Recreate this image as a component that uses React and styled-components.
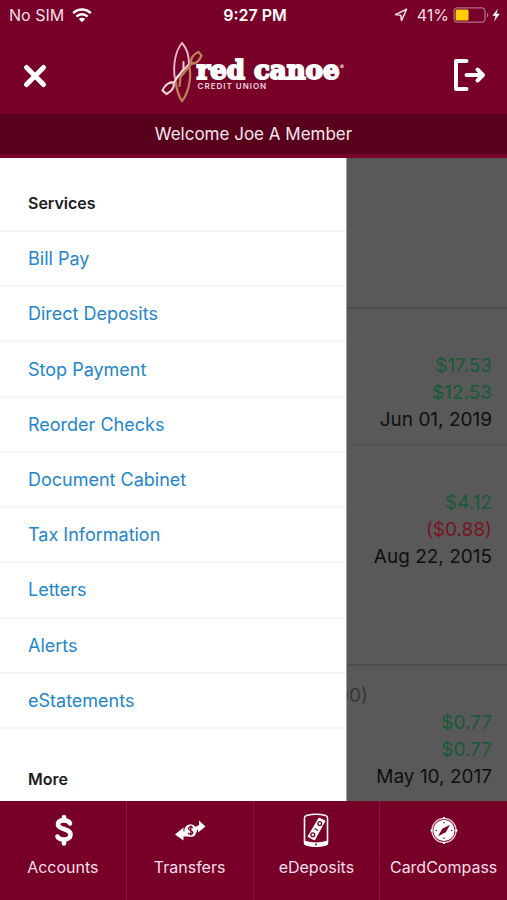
import React from "react";
import styled, { createGlobalStyle } from "styled-components";

const GlobalStyle = createGlobalStyle`
  * {
    box-sizing: border-box;
  }

  body {
    margin: 0;
    font-family: Inter, "Liberation Sans", sans-serif;
    font-size: 18px;
    color: #1c1c1c;
  }
`;

const Screen = styled.div`
  height: 100vh;
  display: flex;
  flex-direction: column;
  overflow: hidden;
`;

const Top = styled.header`
  background: #780028;
  color: white;
  padding-bottom: 4px;
`;

const StatusBar = styled.div`
  display: grid;
  grid-template-columns: 1fr auto 1fr;
  align-items: center;
  height: 30px;
  padding: 0 6px 0 9px;
  font-size: 16px;
`;

const StatusGroup = styled.div`
  display: flex;
  align-items: center;
  justify-content: ${(props) => (props.$end ? "flex-end" : "flex-start")};
  gap: ${(props) => (props.$end ? "4px" : "8px")};
  color: #f3dfe6;
`;

const Clock = styled.span`
  font-weight: 600;
`;

const TitleBar = styled.div`
  display: flex;
  align-items: center;
  justify-content: space-between;
  height: 84px;
  padding: 6px 20px 0 18px;
`;

const IconButton = styled.button`
  display: flex;
  justify-content: center;
  width: 34px;
  padding: 0;
  border: 0;
  background: none;
  color: white;
`;

const Brand = styled.div`
  display: flex;
  align-items: center;
  padding-bottom: 6px;
`;

const BrandText = styled.div`
  display: flex;
  flex-direction: column;
  padding-top: 2px;
`;

const BrandName = styled.span`
  font-family: "DejaVu Serif", serif;
  font-weight: bold;
  font-size: 26px;
  line-height: 26px;
  -webkit-text-stroke: 2px white;
`;

const BrandMark = styled.sup`
  font-size: 5px;
  line-height: 0;
  vertical-align: 11px;
  -webkit-text-stroke: 0;
`;

const BrandTag = styled.span`
  font-weight: 600;
  font-size: 8px;
  line-height: 6px;
  letter-spacing: 1px;
  padding-left: 1px;
  color: #f0d5df;
`;

const Welcome = styled.div`
  height: 40px;
  background: #58001c;
  color: #f7e6ec;
  font-size: 17px;
  line-height: 40px;
  text-align: center;
`;

const Main = styled.main`
  position: relative;
  flex: 1;
  min-height: 0;
  overflow: hidden;
  background: #595959;
`;

const Drawer = styled.nav`
  position: absolute;
  top: 0;
  bottom: 0;
  left: 0;
  width: 68.4%;
  display: flex;
  flex-direction: column;
  background: white;
  border-right: 1px solid #a0a0a0;
`;

const DrawerTitle = styled.h2`
  display: flex;
  align-items: flex-end;
  margin: 0;
  height: 72px;
  padding: 0 28px ${(props) => (props.$last ? "9px" : "14px")};
  font-size: 16px;
  line-height: 26px;
  font-weight: 600;
`;

const DrawerList = styled.ul`
  flex: 1;
  display: flex;
  flex-direction: column;
  margin: 0;
  padding: 0;
  list-style: none;
  border-bottom: 2px solid #f5f5f5;
`;

const DrawerItem = styled.li`
  flex: 1;
  display: flex;
  border-top: 2px solid #f5f5f5;
`;

const DrawerLink = styled.a`
  flex: 1;
  display: flex;
  align-items: center;
  padding: 0 28px;
  color: #2585cb;
  text-decoration: none;
`;

const Account = styled.section`
  height: ${(props) => props.$height}px;
  padding: ${(props) => props.$top}px 15px 0;
  border-bottom: 2px solid ${(props) => (props.$faint ? "#545454" : "#4c4c4c")};
  font-size: 19px;
  line-height: 27px;
  text-align: right;
`;

const AccountName = styled.div`
  width: 340px;
  margin-left: 13px;
  color: #363636;
`;

const Amount = styled.div`
  color: ${(props) => (props.$negative ? "#771523" : "#175a38")};
`;

const Posted = styled.div`
  color: #0f0f0f;
`;

const TabBar = styled.nav`
  display: grid;
  grid-template-columns: repeat(4, 1fr);
  height: 99px;
  background: #780028;
`;

const Tab = styled.a`
  display: flex;
  flex-direction: column;
  align-items: center;
  gap: 7px;
  padding-top: 11px;
  border-right: 1px solid #87183f;
  color: #f6dfe8;
  font-size: 16px;
  line-height: 24px;
  text-decoration: none;

  &:last-child {
    border-right: 0;
  }
`;

const services = [
  "Bill Pay",
  "Direct Deposits",
  "Stop Payment",
  "Reorder Checks",
  "Document Cabinet",
  "Tax Information",
  "Letters",
  "Alerts",
  "eStatements",
];

const accounts = [
  { height: 151, top: 0, lines: [] },
  { height: 137, top: 43, faint: true, lines: ["$17.53", "$12.53"], date: "Jun 01, 2019" },
  { height: 220, top: 43, lines: ["$4.12", "($0.88)"], date: "Aug 22, 2015" },
  { height: 137, top: 16, name: "Savings (0000)", lines: ["$0.77", "$0.77"], date: "May 10, 2017" },
];

function WifiIcon() {
  return (
    <svg width="20" height="15" viewBox="0 0 20 15" fill="none" stroke="white" strokeWidth="2.4">
      <path d="M1.2 5.2C6 .2 14 .2 18.8 5.2" />
      <path d="M4.4 8.6C7.6 5.4 12.4 5.4 15.6 8.6" />
      <path d="M6.8 10.9C8.6 9.2 11.4 9.2 13.2 10.9L10 14.3Z" fill="white" stroke="none" />
    </svg>
  );
}

function LocationIcon() {
  return (
    <svg width="14" height="14" viewBox="0 0 14 14" fill="none" stroke="#f3dfe6" strokeWidth="1.5" strokeLinejoin="round">
      <path d="M12.6 1.2L1.4 6.6L6.8 7.2L7.5 12.6Z" />
    </svg>
  );
}

function BatteryIcon() {
  return (
    <svg width="48" height="16" viewBox="0 0 48 16">
      <rect x="1" y=".8" width="31" height="14.4" rx="3.5" fill="none" stroke="#b0708a" strokeWidth="1.3" />
      <rect x="2.6" y="2.6" width="13" height="10.8" rx="1.5" fill="#ffcc00" />
      <path d="M34 5.5C35.6 6.2 35.6 9.8 34 10.5Z" fill="#b0708a" />
      <path d="M45 1.6L39.4 8.8H42.6L41 14.4L46.8 6.8H43.5Z" fill="white" />
    </svg>
  );
}

function CloseIcon() {
  return (
    <svg width="28" height="28" viewBox="0 0 28 28" stroke="white" strokeWidth="5" strokeLinecap="round">
      <path d="M5.5 6.5L22.5 23.5M22.5 6.5L5.5 23.5" />
    </svg>
  );
}

function LogoutIcon() {
  return (
    <svg width="34" height="34" viewBox="0 0 34 34" fill="none" stroke="white" strokeWidth="4" strokeLinecap="round" strokeLinejoin="round">
      <path d="M13.5 3H3V31H13.5" />
      <path d="M13.5 17H30M24.5 11.5L30 17L24.500 22.500" />
    </svg>
  );
}

function CanoeLogo() {
  return (
    <svg width="36" height="62" viewBox="0 0 36 62" fill="none" strokeWidth="1.9" strokeLinecap="round" overflow="visible">
      <path d="M21 2C15 9 12 22 13.6 36" stroke="#e9b9cb" />
      <path d="M21 2C25.5 7 28 15 28 23" stroke="#e9b9cb" />
      <path d="M14.5 40C15.500 48 18 56 21 60C27 53 30.500 38 28.600 27" stroke="#bb8458" strokeWidth="2.200" />
      <path d="M18.500 45L19.500 36L31 22" stroke="#bb8458" strokeWidth="2.200" />
      <path d="M30.5 22.5C28.5 18 32.5 13 37.5 11L40.5 14.500C38.500 20 34.500 23.500 30.500 22.500Z" stroke="#bb8458" strokeWidth="2.200" />
      <path d="M12.5 42L22.500 28V21" stroke="#f3d6e0" strokeWidth="2" />
      <path d="M14 38L27 24" stroke="#f3d6e0" strokeWidth="1.8" />
      <path d="M12.5 41.5C8 40.500 3.500 44.500 1.500 49.500L5.500 53C10.500 50.500 14 46 12.500 41.500Z" stroke="#f3d6e0" strokeWidth="2.200" />
    </svg>
  );
}

function DollarIcon() {
  return (
    <svg width="32" height="36" viewBox="0 0 32 36" fill="none" stroke="white" strokeWidth="4.6" strokeLinecap="round">
      <path d="M23 11.500C21.500 7.500 11.500 7 11 12C10.500 18 23.500 16 23.500 22.700C23.500 29 12 28.500 10.500 24.500" />
      <path d="M17 5V8M17 28V31.500" />
    </svg>
  );
}

function TransferIcon() {
  return (
    <svg width="32" height="36" viewBox="0 0 32 36">
      <path d="M1 22.500L9.500 15.500V19.500H13L25 13V8.500L31.500 14.500L24 20.500V16.800L20 24.500H9.500V28.500Z" fill="white" />
      <circle cx="16.500" cy="18.500" r="6.200" fill="white" />
      <path d="M18.700 15.900C17.500 14.300 14.500 14.700 14.500 16.600C14.500 18.900 18.700 18 18.700 20.500C18.700 22.700 15.300 22.700 14 21M16.900 13.500V23.500" fill="none" stroke="#780028" strokeWidth="1.3" />
    </svg>
  );
}

function DepositIcon() {
  return (
    <svg width="32" height="36" viewBox="0 0 32 36" fill="none">
      <path d="M6.500 3.500Q16 1 25.500 3.500Q27.500 4 27.500 6V31Q27.500 32.500 25.500 33Q16 35.500 6.500 33Q4.500 32.500 4.500 31V6Q4.500 4 6.500 3.500Z" stroke="white" strokeWidth="1.6" />
      <path d="M4.500 28.500Q16 32.500 27.500 28.500V32Q16 36.500 4.500 32Z" fill="white" />
      <path d="M19 6L25 9L14.500 28L8 24.500Z" fill="white" stroke="white" strokeLinejoin="round" />
      <g stroke="#780028" strokeWidth="1.300">
        <circle cx="19.800" cy="11.500" r="1.900" />
        <path d="M14.500 16.500L18 18.500" />
        <circle cx="12.800" cy="22.800" r="1.900" />
      </g>
      <circle cx="16" cy="32.500" r="1" fill="#780028" />
    </svg>
  );
}

function CompassIcon() {
  return (
    <svg width="32" height="36" viewBox="0 0 32 36">
      <circle cx="16" cy="18.500" r="12" fill="none" stroke="#edc9d6" strokeWidth="1.400" />
      <circle cx="16" cy="18.500" r="10.600" fill="white" />
      <path d="M15 6.500L16 5L17 6.500ZM15 30.500L16 32L17 30.500ZM4 17.500L2.500 18.500L4 19.500ZM28 17.500L29.500 18.500L28 19.500Z" fill="white" stroke="white" />
      <g fill="#780028">
        <path d="M22 12.800L17.800 20.300L10 24.200L14.200 16.700Z" />
        <circle cx="16" cy="10.800" r=".8" />
        <circle cx="16" cy="26.200" r=".8" />
        <circle cx="8.300" cy="18.500" r=".8" />
        <circle cx="23.700" cy="18.500" r=".8" />
      </g>
    </svg>
  );
}

const tabs = [
  { label: "Accounts", Icon: DollarIcon },
  { label: "Transfers", Icon: TransferIcon },
  { label: "eDeposits", Icon: DepositIcon },
  { label: "CardCompass", Icon: CompassIcon },
];

function Header() {
  return (
    <Top>
      <StatusBar>
        <StatusGroup>
          No SIM <WifiIcon />
        </StatusGroup>
        <Clock>9:27 PM</Clock>
        <StatusGroup $end>
          <LocationIcon />
          <span>&nbsp;41%</span>
          <BatteryIcon />
        </StatusGroup>
      </StatusBar>
      <TitleBar>
        <IconButton aria-label="Close menu">
          <CloseIcon />
        </IconButton>
        <Brand>
          <CanoeLogo />
          <BrandText>
            <BrandName>
              red canoe<BrandMark>®</BrandMark>
            </BrandName>
            <BrandTag>CREDIT UNION</BrandTag>
          </BrandText>
        </Brand>
        <IconButton aria-label="Log out">
          <LogoutIcon />
        </IconButton>
      </TitleBar>
      <Welcome>Welcome Joe A Member</Welcome>
    </Top>
  );
}

export default function App() {
  return (
    <Screen>
      <GlobalStyle />
      <Header />
      <Main>
        {accounts.map((account, i) => (
          <Account key={i} $height={account.height} $top={account.top} $faint={account.faint}>
            {account.name ? <AccountName>{account.name}</AccountName> : ""}
            {account.lines.map((line, j) => (
              <Amount key={j} $negative={line.startsWith("(")}>
                {line}
              </Amount>
            ))}
            <Posted>{account.date}</Posted>
          </Account>
        ))}
        <Drawer>
          <DrawerTitle>Services</DrawerTitle>
          <DrawerList>
            {services.map((service) => (
              <DrawerItem key={service}>
                <DrawerLink href="#">{service}</DrawerLink>
              </DrawerItem>
            ))}
          </DrawerList>
          <DrawerTitle $last>More</DrawerTitle>
        </Drawer>
      </Main>
      <TabBar>
        {tabs.map(({ label, Icon }) => (
          <Tab key={label} href="#">
            <Icon />
            {label}
          </Tab>
        ))}
      </TabBar>
    </Screen>
  );
}
